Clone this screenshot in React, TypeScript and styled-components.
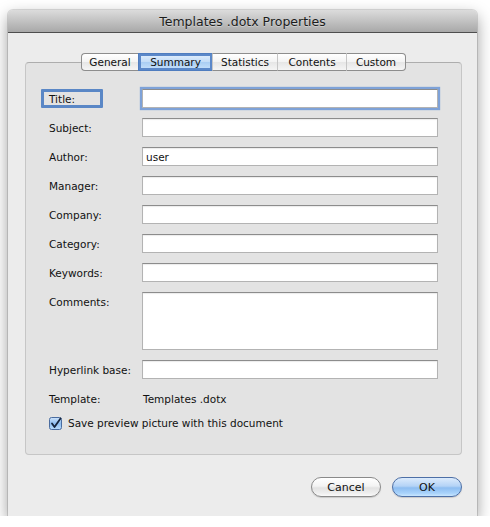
import React from 'react';
import styled, { createGlobalStyle } from 'styled-components';

const GlobalStyle = createGlobalStyle`
  html, body {
    margin: 0;
    padding: 0;
    background: #ffffff;
  }
  body {
    font-family: "DejaVu Sans", "Liberation Sans", sans-serif;
    font-size: 10.5px;
    color: #111;
  }
`;

const Window = styled.div`
  width: 469px;
  height: 506px;
  margin: 10px 0 0 8px;
  box-sizing: border-box;
  background: #ececec;
  border-radius: 5px 5px 0 0;
  box-shadow:
    0 6px 16px rgba(0, 0, 0, 0.4),
    0 0 0 1px rgba(0, 0, 0, 0.12);
  display: flex;
  flex-direction: column;
  overflow: hidden;
`;

const TitleBar = styled.div`
  height: 22px;
  flex: none;
  background: linear-gradient(#dcdcdc, #a8a8a8);
  border-bottom: 1px solid #4e4e4e;
  display: flex;
  align-items: center;
  justify-content: center;
  font-size: 12.5px;
  color: #1c1c1c;
  text-shadow: 0 1px 0 rgba(255, 255, 255, 0.35);
`;

const Body = styled.div`
  padding: 20px 15px 19px 17px;
  display: flex;
  flex-direction: column;
`;

const TabBar = styled.div`
  position: relative;
  z-index: 1;
  display: flex;
  justify-content: center;
  height: 18px;
`;

const Tab = styled.div<{ $active?: boolean; $first?: boolean; $last?: boolean }>`
  box-sizing: border-box;
  height: 18px;
  display: flex;
  align-items: center;
  justify-content: center;
  border: 1px solid #8d8d8d;
  border-left: ${(p) => (p.$first ? '1px solid #8d8d8d' : '1px solid #c6c6c6')};
  border-right: ${(p) => (p.$last ? '1px solid #8d8d8d' : 'none')};
  border-radius: ${(p) => (p.$first ? '4px 0 0 4px' : p.$last ? '0 4px 4px 0' : '0')};
  background: ${(p) =>
    p.$active
      ? 'linear-gradient(#e3f0fd 0%, #c2dcf7 50%, #a9cdf3 51%, #c8e2fb 100%)'
      : 'linear-gradient(#ffffff 0%, #f3f3f3 50%, #e6e6e6 51%, #f5f5f5 100%)'};
  box-shadow: ${(p) => (p.$active ? 'inset 0 0 0 2px #5b88c9' : 'none')};
  ${(p) => (p.$active ? 'border-color: #4f7dbf;' : '')}
  font-size: 10.5px;
  color: #111;
`;

const GroupBox = styled.div`
  margin-top: -9px;
  height: 393px;
  box-sizing: border-box;
  background: #e3e3e3;
  border: 1px solid #c6c6c6;
  border-top-color: #adadad;
  border-radius: 4px;
  padding: 26px 0 0 23px;
`;

const Form = styled.div`
  display: grid;
  grid-template-columns: 93px 296px;
  row-gap: 10px;
`;

const Label = styled.div<{ $focused?: boolean }>`
  box-sizing: border-box;
  height: 19px;
  padding-top: 1px;
  line-height: 19px;
  white-space: nowrap;
  ${(p) =>
    p.$focused
      ? `
    width: 62px;
    margin-left: -8px;
    padding-left: 5px;
    border: 3px solid #5a87c6;
    border-radius: 1px;
    line-height: 13px;
  `
      : ''}
`;

const Field = styled.input<{ $focused?: boolean }>`
  box-sizing: border-box;
  height: 19px;
  width: 296px;
  margin: 0;
  padding: 1px 3px 0;
  border: 1px solid #b3b3b3;
  border-top-color: #8c8c8c;
  background: #fff;
  font-family: inherit;
  font-size: 10.5px;
  color: #111;
  outline: none;
  box-shadow: ${(p) =>
    p.$focused
      ? '0 0 1px 2px rgba(108, 150, 214, 0.85)'
      : 'inset 0 1px 1px rgba(0, 0, 0, 0.08)'};
`;

const Area = styled.textarea`
  box-sizing: border-box;
  height: 58px;
  width: 296px;
  margin: 0;
  padding: 2px 3px;
  border: 1px solid #b3b3b3;
  border-top-color: #8c8c8c;
  background: #fff;
  resize: none;
  font-family: inherit;
  font-size: 10.5px;
  outline: none;
  box-shadow: inset 0 1px 1px rgba(0, 0, 0, 0.08);
`;

const Value = styled.div`
  box-sizing: border-box;
  height: 19px;
  padding: 1px 0 0 1px;
  line-height: 19px;
`;

const CheckRow = styled.label`
  margin-top: 8px;
  height: 14px;
  display: flex;
  align-items: center;
  gap: 6px;
`;

const Buttons = styled.div`
  margin-top: 22px;
  display: flex;
  justify-content: flex-end;
  gap: 11px;
`;

const Button = styled.button<{ $default?: boolean }>`
  box-sizing: border-box;
  width: 70px;
  height: 20px;
  border-radius: 10px;
  padding: 0;
  font-family: inherit;
  font-size: 11px;
  color: #111;
  border: 1px solid ${(p) => (p.$default ? '#4d6fa6' : '#8a8a8a')};
  background: ${(p) =>
    p.$default
      ? 'linear-gradient(#dcebfc 0%, #b4d3f6 45%, #8dbdf1 55%, #a9d3fb 85%, #c9e6fe 100%)'
      : 'linear-gradient(#ffffff 0%, #f3f3f3 45%, #e2e2e2 55%, #efefef 85%, #fafafa 100%)'};
  box-shadow: 0 1px 1px rgba(0, 0, 0, 0.15);
`;

const CheckBox = () => (
  <svg width="13" height="13" viewBox="0 0 13 13">
    <defs>
      <linearGradient id="cb" x1="0" y1="0" x2="0" y2="1">
        <stop offset="0" stopColor="#cfe4fb" />
        <stop offset="0.5" stopColor="#8ebdf0" />
        <stop offset="1" stopColor="#b9dcfc" />
      </linearGradient>
    </defs>
    <rect x="0.5" y="0.5" width="12" height="12" rx="2" fill="url(#cb)" stroke="#4a6c9f" />
    <path d="M3 6.5 L5.5 10 L11.5 1.5" fill="none" stroke="#15243d" strokeWidth="1.8" strokeLinecap="round" strokeLinejoin="round" />
  </svg>
);

const tabs = [
  { label: 'General', w: 57 },
  { label: 'Summary', w: 74 },
  { label: 'Statistics', w: 65 },
  { label: 'Contents', w: 69 },
  { label: 'Custom', w: 60 },
];

const fields = [
  { label: 'Subject:', value: '' },
  { label: 'Author:', value: 'user' },
  { label: 'Manager:', value: '' },
  { label: 'Company:', value: '' },
  { label: 'Category:', value: '' },
  { label: 'Keywords:', value: '' },
];

export default function App() {
  return (
    <>
      <GlobalStyle />
      <Window>
        <TitleBar>Templates .dotx Properties</TitleBar>
        <Body>
          <TabBar>
            {tabs.map((t, i) => (
              <Tab
                key={t.label}
                $active={t.label === 'Summary'}
                $first={i === 0}
                $last={i === tabs.length - 1}
                style={{ width: t.w }}
              >
                {t.label}
              </Tab>
            ))}
          </TabBar>
          <GroupBox>
            <Form>
              <Label $focused>Title:</Label>
              <Field $focused defaultValue="" />
              {fields.map((f) => (
                <React.Fragment key={f.label}>
                  <Label>{f.label}</Label>
                  <Field defaultValue={f.value} />
                </React.Fragment>
              ))}
              <Label>Comments:</Label>
              <Area defaultValue="" />
              <Label>Hyperlink base:</Label>
              <Field defaultValue="" />
              <Label>Template:</Label>
              <Value>Templates .dotx</Value>
            </Form>
            <CheckRow>
              <CheckBox />
              <span>Save preview picture with this document</span>
            </CheckRow>
          </GroupBox>
          <Buttons>
            <Button>Cancel</Button>
            <Button $default>OK</Button>
          </Buttons>
        </Body>
      </Window>
    </>
  );
}
